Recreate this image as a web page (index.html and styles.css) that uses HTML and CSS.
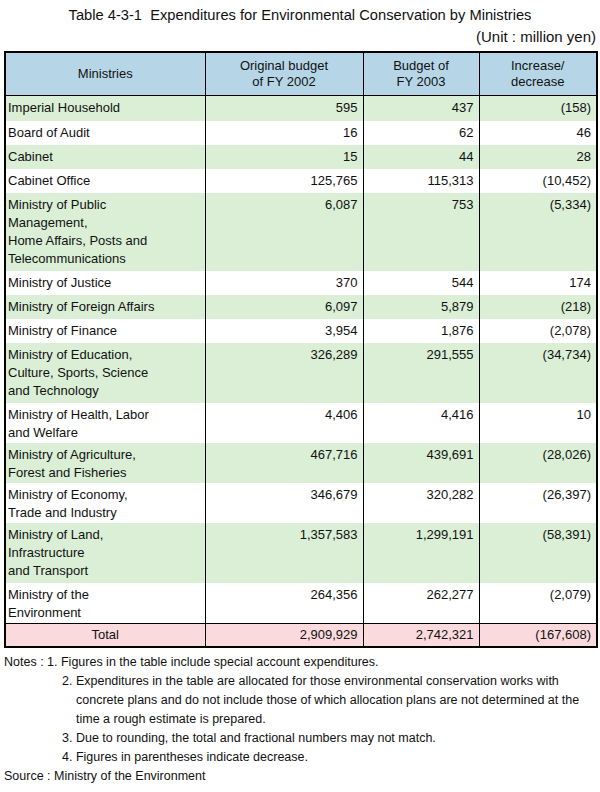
FILE: index.html
```html
<!DOCTYPE html>
<html lang="en">
<head>
<meta charset="utf-8">
<title>Table 4-3-1</title>
<link rel="stylesheet" href="styles.css">
</head>
<body>
<div class="page">
  <h1 class="title">Table 4-3-1&nbsp; Expenditures for Environmental Conservation by Ministries</h1>
  <div class="unit">(Unit : million yen)</div>
  <table class="exp">
    <colgroup>
      <col class="c1"><col class="c2"><col class="c3"><col class="c4">
    </colgroup>
    <thead>
      <tr class="head">
        <th>Ministries</th>
        <th>Original budget<br>of FY 2002</th>
        <th>Budget of<br>FY 2003</th>
        <th>Increase/<br>decrease</th>
      </tr>
    </thead>
    <tbody>
      <tr class="g l1 first"><td>Imperial Household</td><td>595</td><td>437</td><td>(158)</td></tr>
      <tr class="w l1"><td>Board of Audit</td><td>16</td><td>62</td><td>46</td></tr>
      <tr class="g l1"><td>Cabinet</td><td>15</td><td>44</td><td>28</td></tr>
      <tr class="w l1"><td>Cabinet Office</td><td>125,765</td><td>115,313</td><td>(10,452)</td></tr>
      <tr class="g l4"><td>Ministry of Public<br>Management,<br>Home Affairs, Posts and<br>Telecommunications</td><td>6,087</td><td>753</td><td>(5,334)</td></tr>
      <tr class="w l1"><td>Ministry of Justice</td><td>370</td><td>544</td><td>174</td></tr>
      <tr class="g l1"><td>Ministry of Foreign Affairs</td><td>6,097</td><td>5,879</td><td>(218)</td></tr>
      <tr class="w l1"><td>Ministry of Finance</td><td>3,954</td><td>1,876</td><td>(2,078)</td></tr>
      <tr class="g l3 wide"><td>Ministry of Education,<br>Culture, Sports, Science<br>and Technology</td><td>326,289</td><td>291,555</td><td>(34,734)</td></tr>
      <tr class="w l2"><td>Ministry of Health, Labor<br>and Welfare</td><td>4,406</td><td>4,416</td><td>10</td></tr>
      <tr class="g l2 tight"><td>Ministry of Agriculture,<br>Forest and Fisheries</td><td>467,716</td><td>439,691</td><td>(28,026)</td></tr>
      <tr class="w l2 tight"><td>Ministry of Economy,<br>Trade and Industry</td><td>346,679</td><td>320,282</td><td>(26,397)</td></tr>
      <tr class="g l3 mid"><td>Ministry of Land,<br>Infrastructure<br>and Transport</td><td>1,357,583</td><td>1,299,191</td><td>(58,391)</td></tr>
      <tr class="w l2 env"><td>Ministry of the<br>Environment</td><td>264,356</td><td>262,277</td><td>(2,079)</td></tr>
      <tr class="total"><td>Total</td><td>2,909,929</td><td>2,742,321</td><td>(167,608)</td></tr>
    </tbody>
  </table>
  <div class="notes">
    <p class="note-first">Notes : 1. Figures in the table include special account expenditures.</p>
    <p class="note">2. Expenditures in the table are allocated for those environmental conservation works with concrete plans and do not include those of which allocation plans are not determined at the time a rough estimate is prepared.</p>
    <p class="note">3. Due to rounding, the total and fractional numbers may not match.</p>
    <p class="note">4. Figures in parentheses indicate decrease.</p>
    <p class="source">Source : Ministry of the Environment</p>
  </div>
</div>
</body>
</html>
```

FILE: styles.css
```css
html, body {
  margin: 0;
  padding: 0;
  background: #ffffff;
}

body {
  font-family: "Liberation Sans", Arial, sans-serif;
  font-size: 13px;
  color: #111111;
}

.page {
  width: 600px;
  padding: 4px 4px 0 4px;
  box-sizing: border-box;
}

.title {
  margin: 0;
  font-size: 14.7px;
  font-weight: normal;
  line-height: 22px;
  text-align: center;
}

.unit {
  font-size: 15px;
  line-height: 22px;
  text-align: right;
  margin-bottom: 3px;
}

.exp {
  width: 592px;
  border-collapse: collapse;
  table-layout: fixed;
  border: 2px solid #000;
}

.c1 { width: 200px; }
.c2 { width: 158px; }
.c3 { width: 116px; }
.c4 { width: 118px; }

.exp th,
.exp td {
  border: 1px solid #000;
  padding: 0;
}

.exp th {
  background: #b6d6e8;
  font-weight: normal;
  text-align: center;
  vertical-align: middle;
  line-height: 16px;
  height: 42px;
}

.exp tbody td {
  border-top: 0;
  border-bottom: 0;
  vertical-align: top;
  line-height: 18px;
  padding-top: 3px;
  text-align: right;
  padding-right: 5px;
}

.exp tbody td:first-child {
  text-align: left;
  padding-left: 2px;
  padding-right: 0;
}

.exp tbody tr.g td { background: #daefd6; }
.exp tbody tr.w td { background: #ffffff; }

.l1 td { height: 21px; }
.l2 td { height: 37px; }
.l3 td { height: 57px; }
.l4 td { height: 75px; }

.first td { height: 22px; }

.wide td { line-height: 19px; padding-top: 2px; }
.mid td { line-height: 17px; padding-top: 4px; }
.tight td { line-height: 16px; padding-top: 4px; }
.env td { line-height: 15px; padding-top: 6px; }

.exp tbody tr.total td {
  background: #fadadd;
  border-top: 1px solid #000;
  height: 20px;
  line-height: 18px;
  padding-top: 2px;
}

.exp tbody tr.total td:first-child {
  text-align: center;
  padding-left: 0;
}

.notes {
  margin-top: 5px;
  font-size: 12.5px;
  line-height: 19px;
}

.notes p {
  margin: 0;
}

.note {
  padding-left: 72px;
  text-indent: -14px;
}
```
